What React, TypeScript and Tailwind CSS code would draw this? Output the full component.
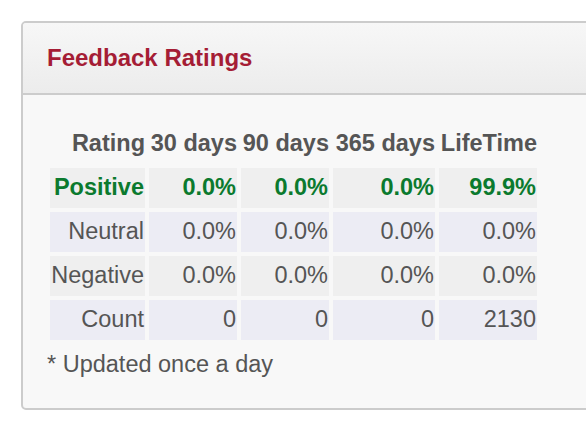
import React from "react";

const rows = [
  { label: "Positive", vals: ["0.0%", "0.0%", "0.0%", "99.9%"], kind: "pos", bg: "bg-[#efefef]" },
  { label: "Neutral", vals: ["0.0%", "0.0%", "0.0%", "0.0%"], kind: "n", bg: "bg-[#ececf4]" },
  { label: "Negative", vals: ["0.0%", "0.0%", "0.0%", "0.0%"], kind: "n", bg: "bg-[#efefef]" },
  { label: "Count", vals: ["0", "0", "0", "2130"], kind: "n", bg: "bg-[#ececf4]" },
];

const heads = ["Rating", "30 days", "90 days", "365 days", "LifeTime"];

export default function App() {
  return (
    <div className="w-[586px] h-[424px] overflow-hidden bg-white pt-[21px] pl-[21px] font-['Liberation_Sans',Arial,sans-serif] text-[23.5px]">
      <div className="w-[620px] border-2 border-[#cccccc] rounded-[5px] bg-[#f8f8f8] overflow-hidden">
        <div className="h-[72px] flex items-center pl-[24px] bg-gradient-to-b from-[#f7f7f7] to-[#ececec] border-b-2 border-[#cccccc]">
          <span className="font-bold text-[#a51d35] leading-none text-[24px]">Feedback Ratings</span>
        </div>
        <div className="pl-[24px] pt-[29px] pb-[30px]">
          <div className="ml-[3px] grid grid-cols-[95px_88px_88px_102px_98px] gap-[4px] w-max">
            {heads.map((h) => (
              <div key={h} className="h-[40px] flex items-center justify-end font-bold text-[#555555] whitespace-nowrap">
                {h}
              </div>
            ))}
            {rows.map((r) => (
              <React.Fragment key={r.label}>
                <div
                  className={`h-[40px] flex items-center justify-end pr-[1px] whitespace-nowrap ${r.bg} ${
                    r.kind === "pos" ? "font-bold text-[#0b7a2e]" : "text-[#555555]"
                  }`}
                >
                  {r.label}
                </div>
                {r.vals.map((v, i) => (
                  <div
                    key={i}
                    className={`h-[40px] flex items-center justify-end pr-[1px] whitespace-nowrap ${r.bg} ${
                      r.kind === "pos" ? "font-bold text-[#0b7a2e]" : "text-[#555555]"
                    }`}
                  >
                    {v}
                  </div>
                ))}
              </React.Fragment>
            ))}
          </div>
          <div className="mt-[11px] text-[#555555] leading-[27px]">* Updated once a day</div>
        </div>
      </div>
    </div>
  );
}
